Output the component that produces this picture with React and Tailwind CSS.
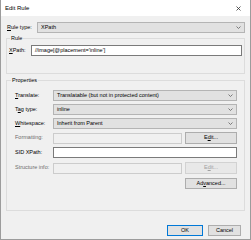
import React from "react";

const font = { fontFamily: '"Segoe UI", "Liberation Sans", Arial, sans-serif' };

function Chevron() {
  return (
    <svg width="5" height="3" viewBox="0 0 5 3" className="shrink-0">
      <polyline points="0.5,0.5 2.5,2.5 4.5,0.5" fill="none" stroke="#606060" strokeWidth="0.8" />
    </svg>
  );
}

function Combo({ text, className = "" }) {
  return (
    <div className={"flex-1 h-[11px] flex items-center justify-between bg-[#e1e1e1] border border-[#b4b4b4] pl-[3px] pr-[3px] " + className}>
      <span className="leading-none">{text}</span>
      <Chevron />
    </div>
  );
}

function Btn({ children, disabled, primary, className = "" }) {
  return (
    <div
      className={
        "flex items-center justify-center border leading-none " +
        (primary
          ? "bg-[#e1e1e1] border-[#0078d7] "
          : disabled
          ? "bg-[#e8e8e8] border-[#d2d2d2] text-[#a0a0a0] "
          : "bg-[#e1e1e1] border-[#adadad] ") +
        className
      }
    >
      {children}
    </div>
  );
}

export default function App() {
  return (
    <div
      style={font}
      className="w-[251px] h-[240px] bg-[#f0f0f0] border-x border-b border-[#9c9c9c] text-[5.5px] text-black flex flex-col"
    >
      {/* title bar */}
      <div className="h-[16px] bg-white flex items-center justify-between pl-[4px] pr-[9px] shrink-0">
        <span className="text-[6px] leading-none">Edit Rule</span>
        <svg width="5" height="5" viewBox="0 0 5 5">
          <path d="M0.5 0.5 L4.5 4.5 M4.5 0.5 L0.5 4.5" stroke="#333" strokeWidth="0.8" />
        </svg>
      </div>

      {/* rule type */}
      <div className="mt-[6px] h-[11px] flex items-center pl-[6px] pr-[5px]">
        <span className="w-[30px] leading-none"><u>R</u>ule type:</span>
        <Combo text="XPath" />
      </div>

      {/* Rule group */}
      <fieldset className="mt-[1px] mx-[5px] h-[40px] border border-[#dcdcdc] px-[2px]">
        <legend className="ml-[1px] px-[1px] leading-[8px]">Rule</legend>
        <div className="mt-[3px] h-[11px] flex items-center">
          <span className="w-[22px] leading-none"><u>X</u>Path:</span>
          <div className="flex-1 h-[11px] bg-white border border-[#7a7a7a] flex items-center pl-[3px] leading-none">
            //image[@placement='inline']
          </div>
        </div>
      </fieldset>

      {/* Properties group */}
      <fieldset className="mt-[2px] mx-[5px] h-[135px] border border-[#dcdcdc] pl-[8px] pr-[7px] flex flex-col">
        <legend className="ml-[-4px] px-[1px] leading-[8px]">Properties</legend>
        <div className="mt-[6px] h-[11px] flex items-center">
          <span className="w-[38px] leading-none"><u>T</u>ranslate:</span>
          <Combo text="Translatable (but not in protected content)" />
        </div>
        <div className="mt-[3px] h-[11px] flex items-center">
          <span className="w-[38px] leading-none">T<u>a</u>g type:</span>
          <Combo text="inline" />
        </div>
        <div className="mt-[3px] h-[11px] flex items-center">
          <span className="w-[38px] leading-none"><u>W</u>hitespace:</span>
          <Combo text="Inherit from Parent" />
        </div>
        <div className="mt-[3px] h-[12px] flex items-center">
          <span className="w-[38px] leading-none text-[#6d6d6d]">Formatting:</span>
          <div className="flex-1 h-[11px] bg-[#f0f0f0] border border-[#cccccc]" />
          <Btn className="ml-[3px] w-[52px] h-[12px]">E<u>d</u>it...</Btn>
        </div>
        <div className="mt-[3px] h-[11px] flex items-center">
          <span className="w-[38px] leading-none">SID XPath:</span>
          <div className="flex-1 h-[11px] bg-white border border-[#7a7a7a]" />
        </div>
        <div className="mt-[4px] h-[12px] flex items-center">
          <span className="w-[38px] leading-none text-[#6d6d6d]">Structure info:</span>
          <div className="flex-1 h-[11px] bg-[#f0f0f0] border border-[#cccccc]" />
          <Btn disabled className="ml-[3px] w-[52px] h-[12px]">E<u>d</u>it...</Btn>
        </div>
        <div className="mt-[4px] h-[11px] flex justify-end">
          <Btn className="w-[52px] h-[11px]">Ad<u>v</u>anced...</Btn>
        </div>
      </fieldset>

      {/* bottom buttons */}
      <div className="mt-[14px] flex justify-end pr-[9px] gap-[5px]">
        <Btn primary className="w-[36px] h-[11px]">OK</Btn>
        <Btn className="w-[33px] h-[11px]">Cancel</Btn>
      </div>
    </div>
  );
}
